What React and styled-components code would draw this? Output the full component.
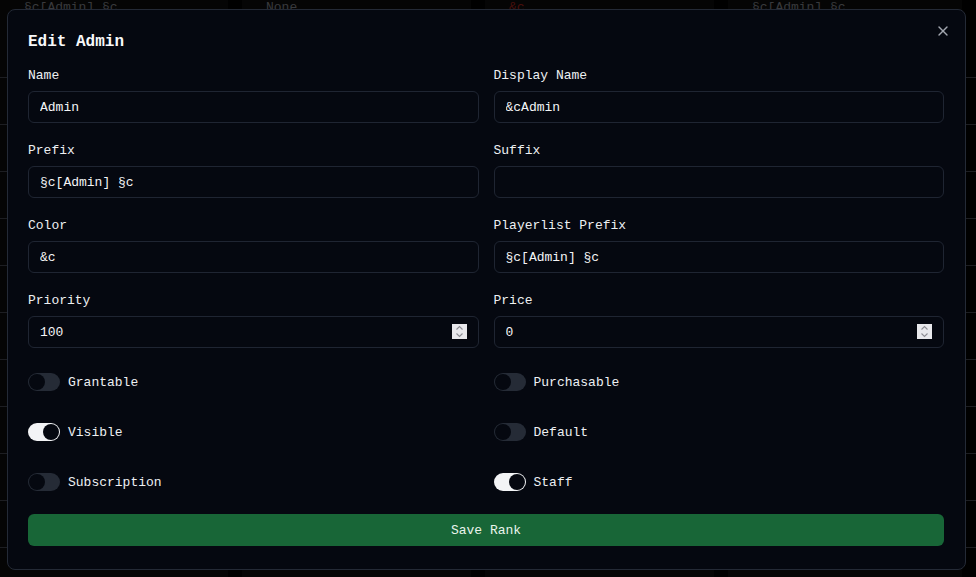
import styled, { createGlobalStyle } from "styled-components";

const GlobalStyle = createGlobalStyle`
  * { box-sizing: border-box; }
  html, body { margin: 0; padding: 0; background: #050505; }
  body {
    font-family: "Liberation Mono", "DejaVu Sans Mono", monospace;
    color: #f1f3f5;
    overflow: hidden;
  }
`;

const bgRows = [
  ["§c[Admin] §c", "None", "&c", "§c[Admin] §c"],
  ...Array.from({ length: 12 }, () => ["", "", "", ""]),
];

export default function App() {
  return (
    <>
      <GlobalStyle />
      <Page>
        <Table>
          {bgRows.map((row, i) => (
            <Row key={i}>
              {row.map((c, j) => (
                <Cell key={j} $red={j === 2}>{c}</Cell>
              ))}
            </Row>
          ))}
        </Table>
      </Page>
      <Overlay />
      <Dialog>
        <Close aria-label="Close">
          <svg width="16" height="16" viewBox="0 0 24 24" fill="none" stroke="currentColor" strokeWidth="2" strokeLinecap="round" strokeLinejoin="round">
            <path d="M18 6 6 18" />
            <path d="m6 6 12 12" />
          </svg>
        </Close>
        <Title>Edit Admin</Title>
        <Form>
          <Field>
            <Label>Name</Label>
            <Input defaultValue="Admin" />
          </Field>
          <Field>
            <Label>Display Name</Label>
            <Input defaultValue="&cAdmin" />
          </Field>
          <Field>
            <Label>Prefix</Label>
            <Input defaultValue="§c[Admin] §c" />
          </Field>
          <Field>
            <Label>Suffix</Label>
            <Input defaultValue="" />
          </Field>
          <Field>
            <Label>Color</Label>
            <Input defaultValue="&c" />
          </Field>
          <Field>
            <Label>Playerlist Prefix</Label>
            <Input defaultValue="§c[Admin] §c" />
          </Field>
          <Field>
            <Label>Priority</Label>
            <NumberInput value="100" />
          </Field>
          <Field>
            <Label>Price</Label>
            <NumberInput value="0" />
          </Field>
          <Toggle label="Grantable" />
          <Toggle label="Purchasable" />
          <Toggle label="Visible" on />
          <Toggle label="Default" />
          <Toggle label="Subscription" />
          <Toggle label="Staff" on />
          <SaveButton>Save Rank</SaveButton>
        </Form>
      </Dialog>
    </>
  );
}

function NumberInput({ value }) {
  return (
    <NumberWrap>
      <Input defaultValue={value} />
      <Spinner>
        <svg width="9" height="13" viewBox="0 0 9 13" fill="none" stroke="#8d8d94" strokeWidth="1.1">
          <path d="M1.5 4.5 4.5 1.5 7.5 4.5" />
          <path d="M1.5 8.5 4.5 11.5 7.5 8.5" />
        </svg>
      </Spinner>
    </NumberWrap>
  );
}

function Toggle({ label, on }) {
  return (
    <ToggleRow>
      <Switch $on={on}>
        <Thumb />
      </Switch>
      <ToggleLabel>{label}</ToggleLabel>
    </ToggleRow>
  );
}

const Page = styled.div`
  height: 100vh;
  overflow: hidden;
  background: #0b0b0c;
`;

const Table = styled.div`
  margin-top: -16px;
`;

const Row = styled.div`
  display: grid;
  grid-template-columns: 242px 243px 243px 1fr;
  height: 47px;
  border-bottom: 1px solid #4a4d55;
`;

const Cell = styled.div`
  padding: 16px 24px;
  font-size: 13px;
  color: ${(p) => (p.$red ? "#b3261e" : "#8c8f96")};
  background: #0d0d0e;
  border-right: 14px solid #000;
`;

const Overlay = styled.div`
  position: fixed;
  inset: 0;
  background: rgba(0, 0, 0, 0.6);
`;

const Dialog = styled.div`
  position: fixed;
  top: 9px;
  left: 7px;
  width: 959px;
  padding: 20px 21px 23px 20px;
  background: #050810;
  border: 1px solid #242a36;
  border-radius: 8px;
`;

const Close = styled.button`
  position: absolute;
  top: 13px;
  right: 14px;
  padding: 0;
  border: 0;
  background: none;
  color: #a3a7b0;
  display: flex;
`;

const Title = styled.h2`
  margin: 4px 0 14px;
  font-size: 16px;
  line-height: 16px;
  font-weight: 700;
  color: #f8f9fa;
`;

const Form = styled.div`
  display: grid;
  grid-template-columns: 1fr 1fr;
  column-gap: 15px;
  row-gap: 16px;
`;

const Field = styled.div`
  display: flex;
  flex-direction: column;
  gap: 5px;
`;

const Label = styled.label`
  padding-top: 2px;
  font-size: 13px;
  line-height: 20px;
  color: #eef0f3;
`;

const Input = styled.input`
  width: 100%;
  height: 32px;
  padding: 0 11px;
  border: 1px solid #1f2532;
  border-radius: 6px;
  background: transparent;
  color: #f4f5f7;
  font-family: inherit;
  font-size: 13px;
  outline: none;
`;

const NumberWrap = styled.div`
  position: relative;
`;

const Spinner = styled.span`
  position: absolute;
  top: 8px;
  right: 12px;
  width: 15px;
  height: 15px;
  background: #e8e8ec;
  display: flex;
  align-items: center;
  justify-content: center;
`;

const ToggleRow = styled.div`
  display: flex;
  align-items: center;
  gap: 8px;
  height: 34px;
  padding-top: 2px;
`;

const Switch = styled.span`
  display: inline-flex;
  align-items: center;
  width: 32px;
  height: 18px;
  padding: 1px;
  border-radius: 9px;
  background: ${(p) => (p.$on ? "#f3f4f6" : "#252b36")};
  justify-content: ${(p) => (p.$on ? "flex-end" : "flex-start")};
`;

const Thumb = styled.span`
  width: 16px;
  height: 16px;
  border-radius: 50%;
  background: #050810;
`;

const ToggleLabel = styled.span`
  font-size: 13px;
  color: #eef0f3;
`;

const SaveButton = styled.button`
  grid-column: 1 / -1;
  height: 32px;
  border: 0;
  border-radius: 6px;
  background: #186637;
  color: #eaf4ec;
  font-family: inherit;
  font-size: 13px;
`;
